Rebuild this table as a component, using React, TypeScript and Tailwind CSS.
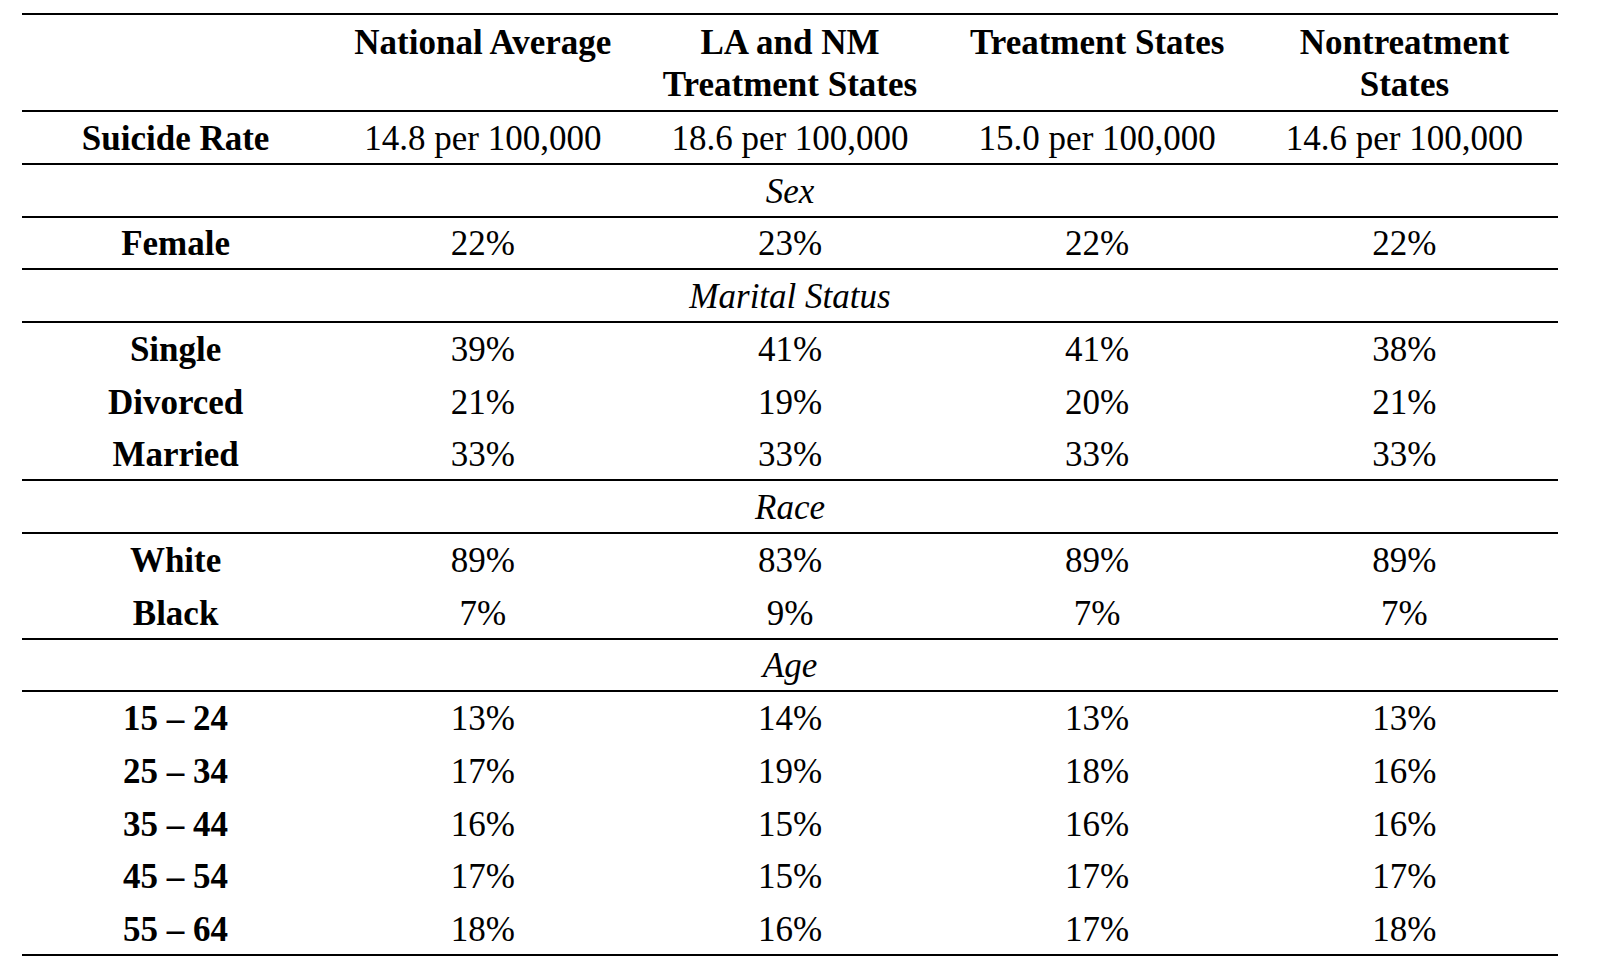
import React from 'react'

type Row =
  | { kind: 'section'; label: string }
  | { kind: 'data'; label: string; values: string[]; divider?: boolean }

const rows: Row[] = [
  {
    kind: 'data',
    label: 'Suicide Rate',
    values: ['14.8 per 100,000', '18.6 per 100,000', '15.0 per 100,000', '14.6 per 100,000'],
    divider: true,
  },
  { kind: 'section', label: 'Sex' },
  { kind: 'data', label: 'Female', values: ['22%', '23%', '22%', '22%'], divider: true },
  { kind: 'section', label: 'Marital Status' },
  { kind: 'data', label: 'Single', values: ['39%', '41%', '41%', '38%'], divider: true },
  { kind: 'data', label: 'Divorced', values: ['21%', '19%', '20%', '21%'] },
  { kind: 'data', label: 'Married', values: ['33%', '33%', '33%', '33%'] },
  { kind: 'section', label: 'Race' },
  { kind: 'data', label: 'White', values: ['89%', '83%', '89%', '89%'], divider: true },
  { kind: 'data', label: 'Black', values: ['7%', '9%', '7%', '7%'] },
  { kind: 'section', label: 'Age' },
  { kind: 'data', label: '15 – 24', values: ['13%', '14%', '13%', '13%'], divider: true },
  { kind: 'data', label: '25 – 34', values: ['17%', '19%', '18%', '16%'] },
  { kind: 'data', label: '35 – 44', values: ['16%', '15%', '16%', '16%'] },
  { kind: 'data', label: '45 – 54', values: ['17%', '15%', '17%', '17%'] },
  { kind: 'data', label: '55 – 64', values: ['18%', '16%', '17%', '18%'] },
]

export default function App() {
  return (
    <div className="min-h-screen bg-white pt-[13px] pl-[22px] text-black font-['Liberation_Serif','Times_New_Roman',serif] text-[35px] leading-none">
      <div className="w-[1536px] border-t-2 border-b-2 border-black">
        {/* header */}
        <div className="grid h-[95px] grid-cols-5 pt-[7px] text-center font-bold leading-[42px]">
          <div />
          <div>National Average</div>
          <div>
            LA and NM
            <br />
            Treatment States
          </div>
          <div>Treatment States</div>
          <div>
            Nontreatment
            <br />
            States
          </div>
        </div>

        {rows.map((row, i) =>
          row.kind === 'section' ? (
            <div
              key={i}
              className="flex h-[52.75px] items-center justify-center border-t-2 border-black pt-[2px] italic"
            >
              {row.label}
            </div>
          ) : (
            <div
              key={i}
              className={
                row.divider
                  ? 'grid h-[52.75px] grid-cols-5 items-center border-t-2 border-black pt-[2px] text-center'
                  : 'grid h-[52.75px] grid-cols-5 items-center border-t-2 border-transparent pt-[2px] text-center'
              }
            >
              <div className="font-bold">{row.label}</div>
              {row.values.map((v, j) => (
                <div key={j}>{v}</div>
              ))}
            </div>
          )
        )}
      </div>
    </div>
  )
}
